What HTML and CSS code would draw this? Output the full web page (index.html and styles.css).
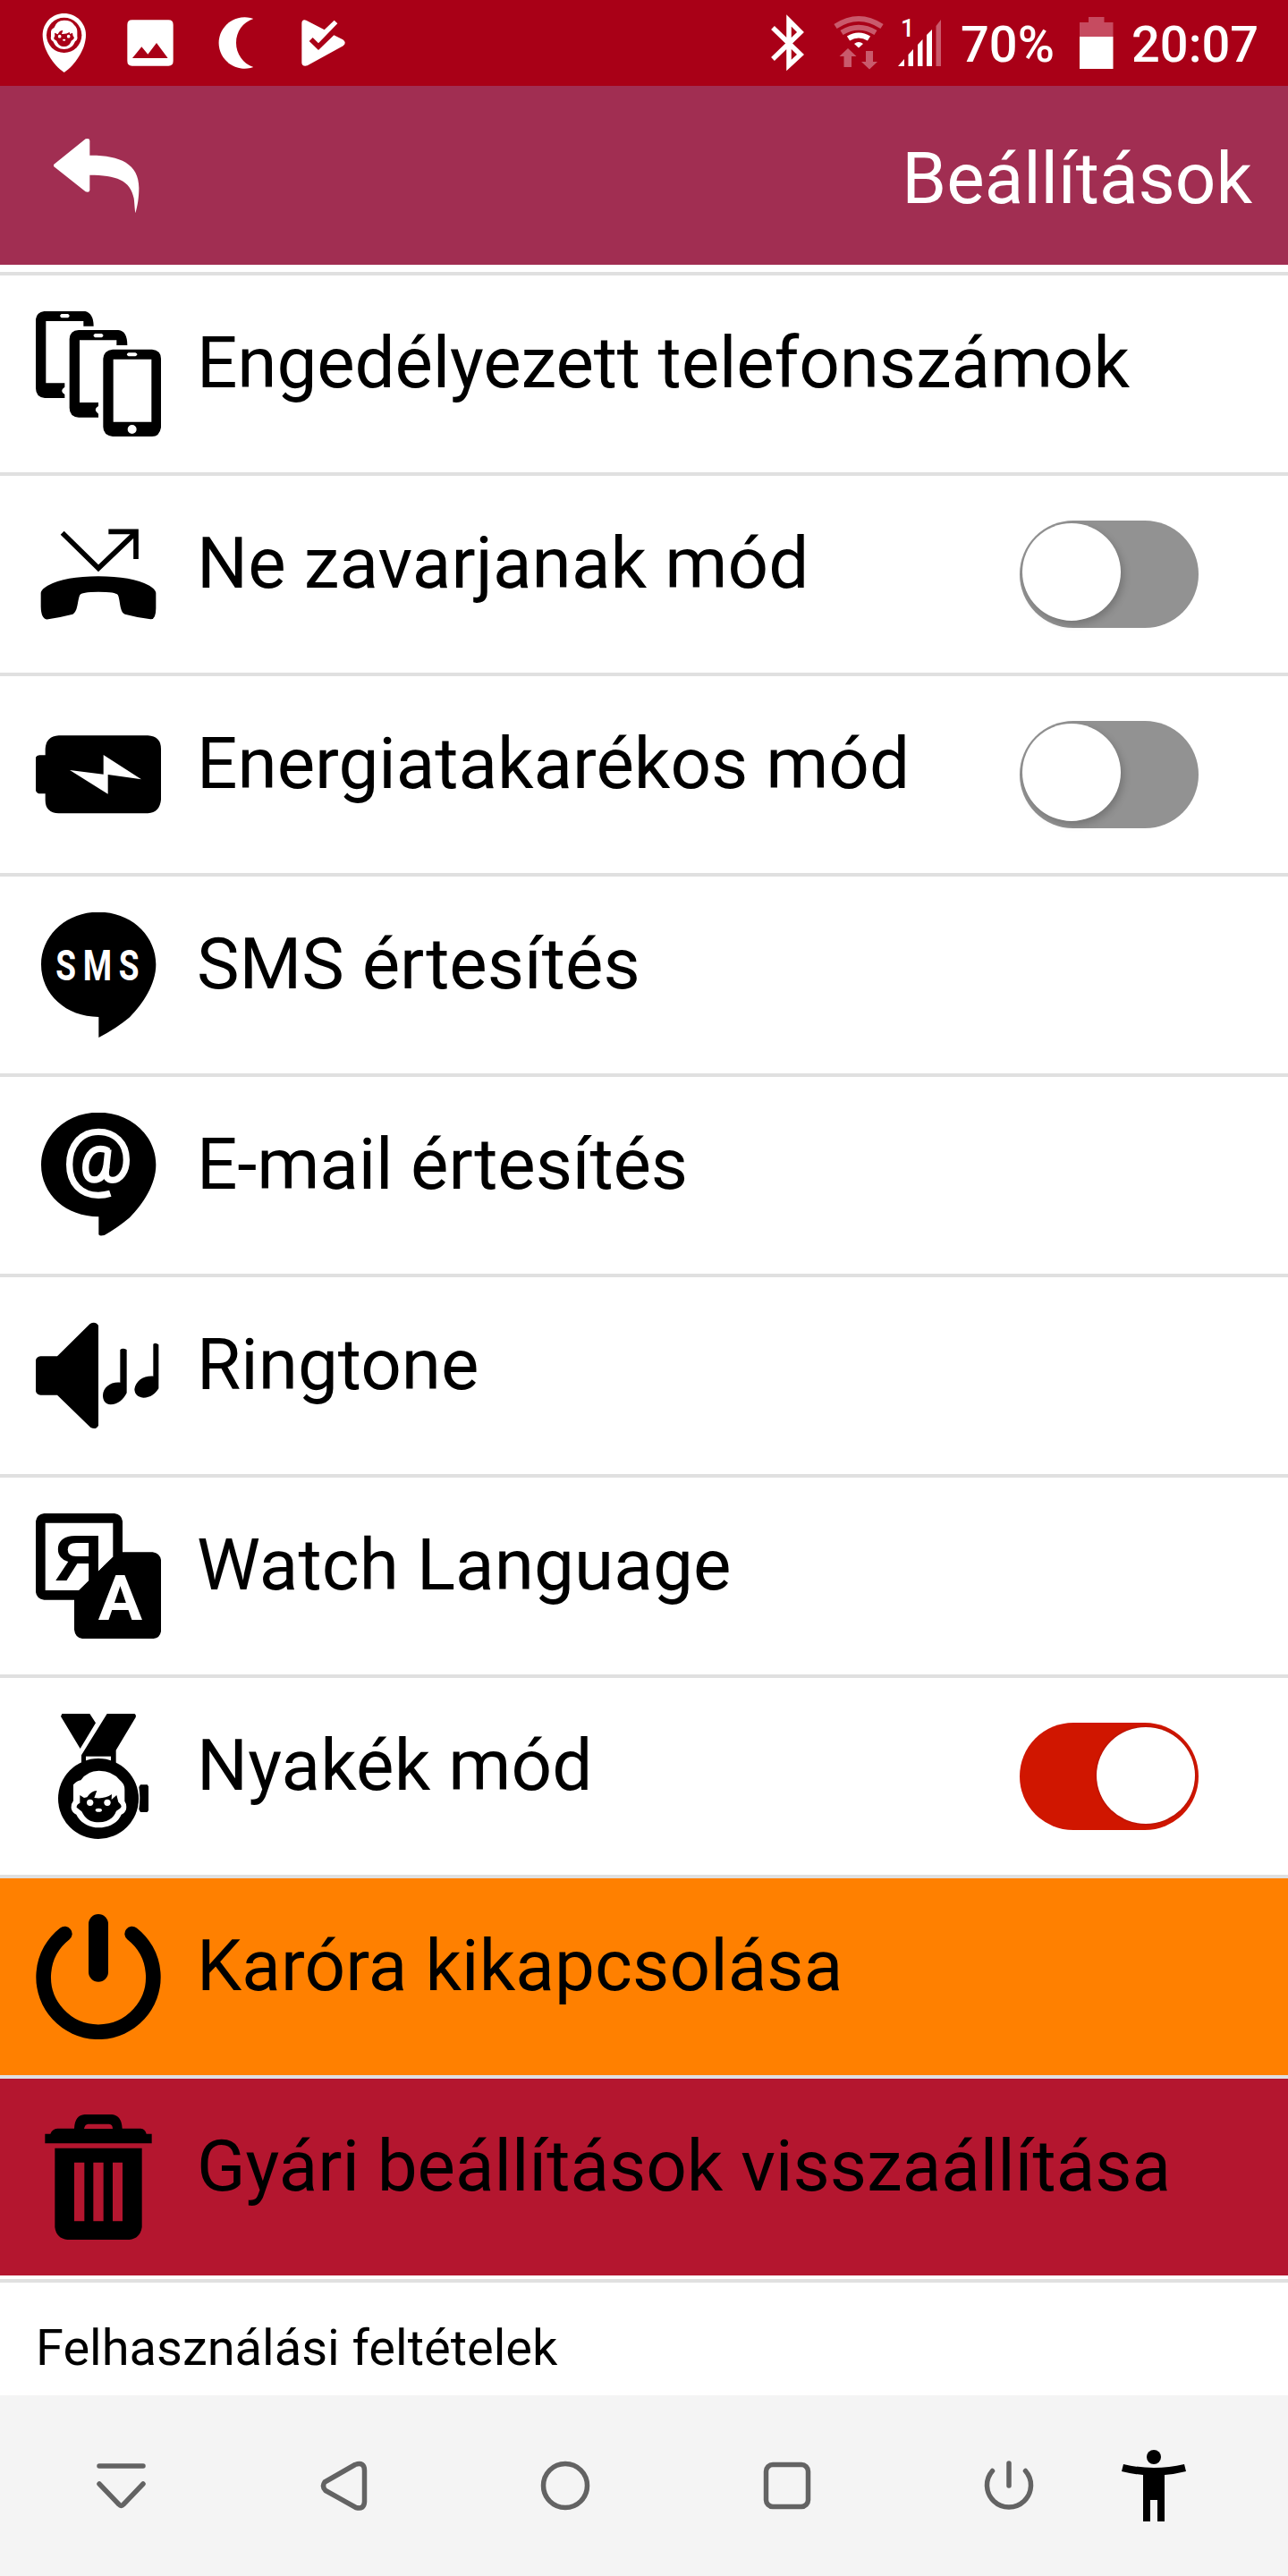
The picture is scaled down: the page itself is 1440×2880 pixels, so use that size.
FILE: index.html
```html
<!DOCTYPE html>
<html lang="hu">
<head>
<meta charset="utf-8">
<title>Beállítások</title>
<link rel="stylesheet" href="styles.css">
</head>
<body>
<div class="status">
  <div class="status-left">
    <svg viewBox="120 0 192 288" width="64" height="96"><path fill="#fff" d="M215 45C254 45 288 76 288 117C288 165 252 218 215 243C178 218 143 165 143 117C143 76 176 45 215 45Z"/><circle cx="215" cy="118" r="59" fill="#a90017"/><path fill="#fff" d="M171 106Q172 97 182 92Q190 68 215 68Q240 68 249 84Q259 92 259 106V122Q262 132 252 139C245 157 232 165 215 165C198 165 186 157 178 139Q168 133 171 122Z"/><path fill="#a90017" d="M183 110L194 115Q199 102 211 102L207 114Q223 115 233 108L235 114L243 110L245 121Q252 127 245 133L239 137C235 150 226 156 215 156C203 156 195 150 190 137L181 131Q180 125 184 121Z"/><g fill="#fff"><circle cx="200" cy="122" r="5.5"/><circle cx="230" cy="122" r="5.5"/><ellipse cx="215" cy="134" rx="5" ry="3"/></g></svg>
    <svg viewBox="408 0 192 288" width="64" height="96"><path fill="#fff" fill-rule="evenodd" d="M443 67H565Q581 67 581 83V205Q581 221 565 221H443Q427 221 427 205V83Q427 67 443 67ZM444 195H563L525 144L496 182L475 157Z"/></svg>
    <svg viewBox="696 0 192 288" width="64" height="96"><path fill="#fff" d="M850 63A87 86 0 1 0 850 225C815 214 792 180 792 144C792 106 815 74 850 63Z"/></svg>
    <svg viewBox="984 0 192 288" width="64" height="96"><path fill="#fff" d="M1012 78Q1013 63 1027 68L1088 100L1121 68L1132 79L1068 145L1049 126L1037 138L1068 168L1120 118L1150 133Q1164 144 1151 154L1031 220Q1012 224 1012 210Z"/></svg>
  </div>
  <div class="status-right">
    <svg class="bt" viewBox="860 0 40 96" width="40" height="96"><path fill="none" stroke="#fff" stroke-width="5.5" d="M864 31L895 61L882 73V23L895 36L864 66"/></svg>
    <svg class="wifi" viewBox="930 0 60 96" width="60" height="96"><g fill="none" stroke-width="6"><g stroke="#c95a6c"><path d="M934 29.500Q960 12.500 986 29.500"/><path d="M941 36.500Q960 25 979 36.500"/></g><path stroke="#fff" d="M948.500 43Q960 36 971.500 43"/></g><path fill="#fff" d="M955 49Q960 45 965 49L960 53.500Z"/><g fill="#c95a6c"><path d="M948 54L957.500 63H952V75H943.500V63H938.500Z"/><path d="M968 57H976V69H981L972 77.500L963 69H968Z"/></g></svg>
    <svg class="signal" viewBox="1002 0 52 96" width="52" height="96"><path fill="#fff" d="M1004 74L1011 66V74ZM1015.500 74V61L1021 55V74ZM1026 74V50L1031.500 44V74ZM1036 74V39L1042 33V74Z"/><text class="sim" x="1007" y="41">1</text><path fill="#c95a6c" d="M1046.500 74V29L1052 22V74Z"/></svg>
    <span class="percent">70%</span>
    <svg class="battery" viewBox="1205 0 42 96" width="42" height="96"><path fill="#c64b60" d="M1217 19H1234.500V25H1244.500V41H1207V25H1217Z"/><path fill="#fff" d="M1207 41H1244.500V77H1207Z"/></svg>
    <span class="clock">20:07</span>
  </div>
</div>
<header class="header">
  <svg viewBox="180 450 288 270" width="96" height="90"><path fill="#fff" d="M181 551L287 466Q301 462 301 472V521C400 520 466 548 466 630C466 665 461 692 454 715C451 690 451 680 449 665C438 605 389 587 301 587V638Q300 647 287 643L181 559Q178 555 181 551Z"/></svg>
  <h1>Beállítások</h1>
</header>
<main class="list">
  <div class="row">
    <svg class="icon" viewBox="120 114 420 420"><path fill-rule="evenodd" d="M148 114H286Q314 122 314 164H280V147H154V355H217V368Q198 381 217 393V405H150Q120 402 120 372V140Q123 118 148 114ZM206 123Q197 129 206 136H228Q238 129 228 123ZM264 177H397Q427 180 427 228H391V211H267V420H330V432Q310 444 330 458V470H264Q233 468 233 438V207Q234 179 264 177ZM319 189Q308 195 319 202H341Q352 195 341 189ZM378 242H510Q540 245 540 273V504Q535 534 510 534H378Q346 530 346 502V273Q348 245 378 242ZM380 275H508V485H380ZM431 253Q420 259 431 265H454Q467 259 454 253ZM443 495A15 15 0 1 0 443 525A15 15 0 1 0 443 495Z"/></svg>
    <span class="label tight">Engedélyezett telefonszámok</span>
  </div>
  <div class="row">
    <svg class="icon" viewBox="120 786 420 420"><path fill="none" stroke="#000" stroke-width="17" d="M209 857L330 976L449 862M364 853H456V945"/><path d="M137 1058Q140 1045 160 1034Q220 1003 330 1003Q440 1003 501 1034Q520 1045 523 1058V1110Q523 1148 505 1147Q460 1141 419 1130C400 1123 404 1080 395 1065Q388 1055 330 1055Q272 1055 268 1066C260 1080 262 1122 244 1130Q200 1141 162 1147Q138 1151 137 1105Z"/></svg>
    <span class="label loose">Ne zavarjanak mód</span>
    <span class="toggle"></span>
  </div>
  <div class="row">
    <svg class="icon" viewBox="120 198 420 420"><path fill-rule="evenodd" d="M197 277H496Q540 280 540 322V492Q536 535 496 538H197Q152 536 152 494V472H130Q120 468 120 460V350Q123 344 132 343H152V322Q154 280 197 277ZM347 342V407L234 393L362 473V408L474 424Z"/></svg>
    <span class="label">Energiatakarékos mód</span>
    <span class="toggle"></span>
  </div>
  <div class="row">
    <svg class="icon" viewBox="120 870 420 420"><path d="M330 869C440 869 523 948 523 1045C523 1110 480 1177 435 1222Q390 1260 331 1290V1221C222 1221 138 1145 138 1045C138 948 222 869 330 869Z"/><text class="bubble-sms" transform="translate(187 1098) scale(.76 1)">SMS</text></svg>
    <span class="label">SMS értesítés</span>
  </div>
  <div class="row">
    <svg class="icon" viewBox="120 162 420 420"><path d="M330 161C440 161 523 240 523 337C523 402 480 469 435 514Q392 550 350 573Q331 577 331 570V511C222 511 138 437 138 337C138 240 222 161 330 161Z"/><g fill="none" stroke="#fff" stroke-width="22" stroke-linejoin="round"><path d="M370 433C355 438 345 439 330 439C272 439 233 399 233 336C233 272 272 226 330 226C385 226 424 264 424 320C424 360 403 388 378 388C360 388 353 376 355 359L363 285"/><path d="M364 291C355 285 346 283 336 283C306 283 287 314 287 347C287 373 297 387 316 387C340 387 352 365 357 341"/></g></svg>
    <span class="label tight">E-mail értesítés</span>
  </div>
  <div class="row">
    <svg class="icon" viewBox="120 834 420 420"><path d="M136 979H192L302 870Q320 860 330 876V1211Q322 1227 304 1218L192 1109H136Q122 1108 120 1096V992Q122 981 136 979ZM403 957Q412 950 425 957V1102C415 1123 395 1141 371 1141C352 1139 345 1126 345 1110C346 1084 370 1064 403 1067ZM514 938Q522 932 532 940V1087C520 1105 505 1118 481 1118C460 1116 452 1105 451 1090C455 1062 480 1044 514 1046Z"/></svg>
    <span class="label">Ringtone</span>
  </div>
  <div class="row">
    <svg class="icon" viewBox="120 156 420 420"><path fill-rule="evenodd" d="M148 156H384Q408 160 411 182V286H512Q536 290 540 312V552Q536 574 515 576H276Q252 573 249 546V446H148Q123 443 120 420V182Q123 160 148 156ZM152 188V414H265L379 302V188Z"/><text class="glyph-ya" x="183" y="380" textLength="162" lengthAdjust="spacingAndGlyphs">Я</text><path d="M265 414L379 302V414Z"/><text class="glyph-a" x="329" y="512" textLength="148" lengthAdjust="spacingAndGlyphs">A</text></svg>
    <span class="label loose">Watch Language</span>
  </div>
  <div class="row">
    <svg class="icon" viewBox="120 828 420 420"><path d="M208 828H301L321 859L269 945L204 837ZM359 828H451Q458 832 455 840L389 950V1000H273V967ZM471 1066H494L498 1072V1152L494 1158H471L466 1148Q472 1112 466 1074Z"/><path fill="#fff" d="M288 971H372V990H288Z"/><ellipse cx="330" cy="1113" rx="135" ry="135"/><path fill="#fff" d="M246 1066Q258 1053 271 1051Q292 1019 332 1019Q378 1019 402 1051Q418 1063 418 1082V1121Q426 1132 423 1149Q419 1161 407 1166C395 1195 365 1210 331 1210C297 1210 268 1192 256 1166Q242 1160 239 1145Q238 1130 246 1120Z"/><path d="M268 1101L282 1110L292 1108Q305 1087 325 1086L316 1110Q350 1115 375 1098L374 1116L391 1101L397 1124Q414 1139 402 1146L390 1154C380 1180 360 1192 331 1192C300 1192 285 1178 274 1156L257 1142Q256 1133 268 1127Z"/><g fill="#fff"><circle cx="302" cy="1126" r="11"/><circle cx="360" cy="1126" r="11"/><ellipse cx="331" cy="1151" rx="11" ry="6"/></g></svg>
    <span class="label loose">Nyakék mód</span>
    <span class="toggle on"></span>
  </div>
  <div class="row orange">
    <svg class="icon" viewBox="120 150 420 420"><g fill="none" stroke="#000" stroke-linecap="round"><path stroke-width="50" d="M217 216A184 184 0 1 0 443 216"/><path stroke-width="66" d="M330 183V344"/></g></svg>
    <span class="label loose">Karóra kikapcsolása</span>
  </div>
  <div class="row red">
    <svg class="icon" viewBox="120 822 420 420"><path fill-rule="evenodd" d="M151 887H169Q175 870 193 869H249Q251 824 284 822H376Q408 826 410 869H472Q487 870 491 887H509V919H151ZM282 870H378Q378 855 366 854H296Q284 855 282 870ZM184 935H476V1200Q470 1238 434 1242H226Q189 1238 184 1200ZM249 983V1180H283V983ZM313 983V1180H347V983ZM378 983V1180H411V983Z"/></svg>
    <span class="label">Gyári beállítások visszaállítása</span>
  </div>
</main>
<footer class="terms">Felhasználási feltételek</footer>
<nav class="nav">
  <div class="nav-item"><svg viewBox="96 2739 80 80" width="80" height="80"><path d="M111 2757H160M111 2777L133 2800Q135.500 2803 138 2800L160 2777"/></svg></div>
  <div class="nav-item"><svg viewBox="344 2739 80 80" width="80" height="80"><path d="M363 2775L397 2755.500Q407.500 2752 407.500 2762V2797Q407 2806 398 2803.500L364 2784.500Q359.500 2780 363 2775Z"/></svg></div>
  <div class="nav-item"><svg viewBox="592 2739 80 80" width="80" height="80"><circle cx="632" cy="2779" r="24.500"/></svg></div>
  <div class="nav-item"><svg viewBox="840 2739 80 80" width="80" height="80"><rect x="856.500" y="2755.500" width="47" height="47" rx="7.500"/></svg></div>
  <div class="nav-item"><svg viewBox="1088 2739 80 80" width="80" height="80"><path d="M1109.500 2762.500A24.500 24.500 0 1 0 1146.500 2762.500M1128 2754V2779"/></svg></div>
  <svg class="person" viewBox="1252 2739 76 80" width="76" height="80"><ellipse cx="1290" cy="2747" rx="8" ry="8"/><path d="M1256 2755Q1290 2763 1324 2755L1326 2763Q1314 2766 1302 2767V2819H1294V2795H1286V2819H1278V2767Q1266 2766 1254 2763Z"/></svg>
</nav>
</body>
</html>
```
FILE: styles.css
```css
* {
  box-sizing: border-box;
}

body {
  margin: 0;
  width: 1440px;
  height: 2880px;
  display: flex;
  flex-direction: column;
  background: #fff;
  color: #000;
  font-family: Roboto, "Liberation Sans", sans-serif;
}

svg {
  display: block;
  flex: none;
}

.status {
  height: 96px;
  display: flex;
  justify-content: space-between;
  padding: 0 30px 0 40px;
  background: #a90017;
  color: #fff;
}

.status-left {
  display: flex;
  gap: 32px;
}

.status-right {
  display: flex;
  font-size: 56px;
  font-weight: 500;
  line-height: 101px;
}

.wifi {
  margin-left: 30px;
}

.signal {
  margin-left: 12px;
}

.sim {
  fill: #fff;
  font: 500 27px Roboto, sans-serif;
}

.percent {
  width: 131px;
  margin-left: 20px;
}

.clock {
  width: 145px;
  margin-left: 18px;
}

.header {
  height: 200px;
  display: flex;
  align-items: flex-start;
  justify-content: space-between;
  padding: 54px 40px 0 60px;
  background: #a12e52;
  color: #fff;
}

.header h1 {
  margin: 3px 0 0;
  font-size: 80px;
  font-weight: 400;
  line-height: 94px;
}

.list {
  margin-top: 8px;
  padding-bottom: 4px;
  border-bottom: 4px solid #e0e0e0;
}

.row {
  height: 224px;
  display: flex;
  align-items: flex-start;
  padding: 40px 100px 0 40px;
  border-top: 4px solid #e0e0e0;
}

.row.orange {
  background: #ff8000;
}

.row.red {
  background: #b4162f;
}

.icon {
  width: 140px;
  height: 140px;
}

.label {
  margin: 11px 0 0 40px;
  font-size: 80px;
  line-height: 94px;
  white-space: nowrap;
}

.label.tight {
  letter-spacing: -0.13px;
}

.label.loose {
  letter-spacing: 0.12px;
}

.bubble-sms {
  fill: #fff;
  font: 700 146px Roboto, sans-serif;
  letter-spacing: 30px;
}

.glyph-ya {
  font: 700 214px "Liberation Sans", sans-serif;
}

.glyph-a {
  fill: #fff;
  font: 700 212px Roboto, sans-serif;
}

.toggle {
  width: 200px;
  height: 120px;
  margin: 10px 0 0 auto;
  padding: 3px;
  border-radius: 60px;
  background: #929292;
}

.toggle::before {
  content: "";
  display: block;
  width: 110px;
  height: 109px;
  border-radius: 50%;
  background: #fff;
  box-shadow: 3px 4px 8px rgba(0, 0, 0, 0.2);
}

.toggle.on {
  padding-top: 5px;
  background: #d01600;
}

.toggle.on::before {
  height: 108px;
  margin-left: 83px;
  box-shadow: 0 0 3px rgba(80, 0, 0, 0.4);
}

.terms {
  height: 126px;
  padding: 40px 40px 0;
  font-size: 56px;
  line-height: 66px;
}

.nav {
  height: 202px;
  display: flex;
  align-items: center;
  padding-left: 12px;
  background: #f4f4f4;
}

.nav-item {
  width: 248px;
  display: flex;
  justify-content: center;
}

.nav-item svg {
  fill: none;
  stroke: #636363;
  stroke-width: 5.5;
  stroke-linecap: round;
  stroke-linejoin: round;
}
```
